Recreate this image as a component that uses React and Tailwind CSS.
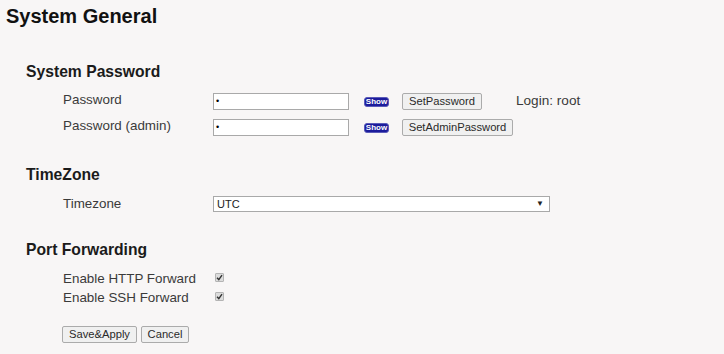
import React from "react";

const F = { fontFamily: '"Liberation Sans", Arial, sans-serif' };

function Heading({ children, className = "" }) {
  return (
    <div className={"pl-[26px] text-[15.7px] leading-[16px] font-bold text-[#1b1b1b] " + className}>
      {children}
    </div>
  );
}

function Label({ children }) {
  return <div className="w-[150px] shrink-0 text-[13.4px] leading-[13px] text-[#3a3a3a]">{children}</div>;
}

function PwInput() {
  return (
    <div className="w-[136px] h-[17px] border border-[#a9a9a9] bg-white flex items-center pl-[2px] text-[9px] leading-none text-black">
      •
    </div>
  );
}

function Show() {
  return (
    <div className="ml-[15px] mt-[4px] w-[25px] h-[10px] rounded-[3px] bg-[#1c1c9c] border border-[#5a5ab8] flex items-center justify-center text-white text-[8px] font-bold leading-none">
      Show
    </div>
  );
}

function Btn({ children, className = "" }) {
  return (
    <div
      className={
        "h-[17px] border border-[#ababab] rounded-[2px] bg-[#f0f0f0] flex items-center justify-center text-[11.2px] leading-none text-[#2a2a2a] " +
        className
      }
    >
      {children}
    </div>
  );
}

function Check() {
  return (
    <div className="ml-[2px] mt-[1px] w-[9px] h-[9px] rounded-[1px] border border-[#b4b4b4] bg-[#dcdcdc] flex items-center justify-center">
      <svg width="7" height="7" viewBox="0 0 7 7">
        <path d="M1 3.8 L2.8 5.6 L6 1.2" stroke="#333" strokeWidth="1.4" fill="none" />
      </svg>
    </div>
  );
}

export default function App() {
  return (
    <div className="w-[724px] h-[354px] bg-[#f8f6f6] overflow-hidden flex flex-col" style={F}>
      <div className="pl-[6px] pt-[6px] text-[20px] leading-[20px] font-bold text-[#111]">System General</div>

      <Heading className="mt-[38px]">System Password</Heading>

      <div className="mt-[13px] pl-[63px] flex items-start h-[17px]">
        <Label>Password</Label>
        <PwInput />
        <Show />
        <Btn className="ml-[13px] w-[80px]">SetPassword</Btn>
        <div className="ml-[34px] text-[13.6px] leading-[14px] mt-[1px] text-[#3a3a3a]">Login: root</div>
      </div>

      <div className="mt-[9px] pl-[63px] flex items-start h-[17px]">
        <Label>Password (admin)</Label>
        <PwInput />
        <Show />
        <Btn className="ml-[13px] w-[111px]">SetAdminPassword</Btn>
      </div>

      <Heading className="mt-[31px]">TimeZone</Heading>

      <div className="mt-[13px] pl-[63px] flex items-start h-[16px]">
        <div className="pt-[1px]">
          <Label>Timezone</Label>
        </div>
        <div className="w-[337px] h-[16px] border border-[#a9a9a9] bg-white flex items-center justify-between pl-[3px] pr-[5px] text-[11px] leading-none text-[#222]">
          <span>UTC</span>
          <span className="text-[8px]">▼</span>
        </div>
      </div>

      <Heading className="mt-[30px]">Port Forwarding</Heading>

      <div className="mt-[14px] pl-[63px] flex items-start h-[13px]">
        <Label>Enable HTTP Forward</Label>
        <Check />
      </div>
      <div className="mt-[6px] pl-[63px] flex items-start h-[13px]">
        <Label>Enable SSH Forward</Label>
        <Check />
      </div>

      <div className="mt-[22px] pl-[62px] flex gap-[4px]">
        <Btn className="w-[75px]">Save&amp;Apply</Btn>
        <Btn className="w-[48px]">Cancel</Btn>
      </div>
    </div>
  );
}
